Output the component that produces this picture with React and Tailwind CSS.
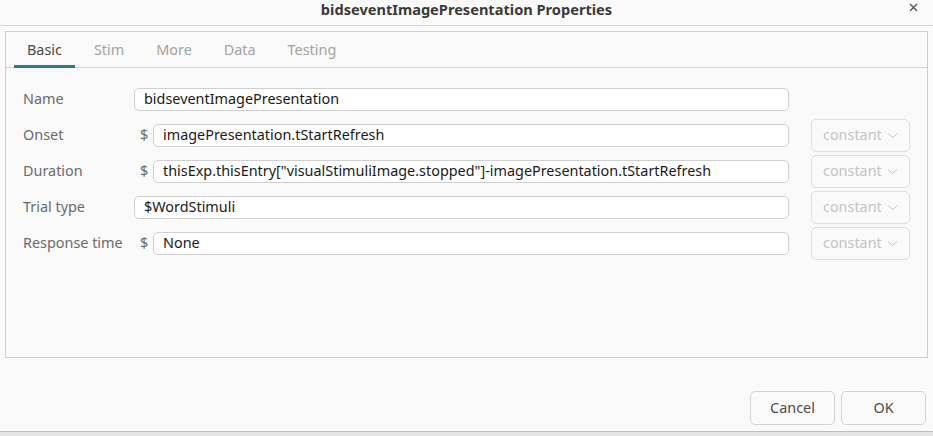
import React from 'react';

const tabs = ['Basic', 'Stim', 'More', 'Data', 'Testing'];

const rows = [
  { label: 'Name', value: 'bidseventImagePresentation', dollar: false, combo: false },
  { label: 'Onset', value: 'imagePresentation.tStartRefresh', dollar: true, combo: true },
  {
    label: 'Duration',
    value: 'thisExp.thisEntry["visualStimuliImage.stopped"]-imagePresentation.tStartRefresh',
    dollar: true,
    combo: true,
  },
  { label: 'Trial type', value: '$WordStimuli', dollar: false, combo: true },
  { label: 'Response time', value: 'None', dollar: true, combo: true },
];

const Combo = () => (
  <div className="w-[99px] h-[33px] shrink-0 rounded-[5px] border border-[#dedede] flex items-center pl-[11px] text-[#c4c4c4]">
    <span>constant</span>
    <svg width="11" height="7" viewBox="0 0 11 7" className="ml-[5px] mt-[1px]">
      <path d="M1 1.5 L5.5 5.5 L10 1.5" fill="none" stroke="#c4c4c4" strokeWidth="1" />
    </svg>
  </div>
);

const App = () => {
  return (
    <div className="w-[933px] h-[436px] bg-[#e4e4e4] font-['Noto_Sans',sans-serif] text-[14.4px]">
      <div className="h-[432px] bg-[#fafafa] border-b border-[#bdbdbd] flex flex-col">
        {/* title bar */}
        <div className="relative h-[26px] border-b border-[#d6d6d6] flex items-center justify-center">
          <span className="font-bold text-[14.6px] text-[#3a3a3a] -mt-[6px]">
            bidseventImagePresentation Properties
          </span>
          <svg width="9" height="9" viewBox="0 0 9 9" className="absolute right-[15px] top-[3px]">
            <path d="M1 1 L8 8 M8 1 L1 8" stroke="#555" strokeWidth="1.4" />
          </svg>
        </div>

        {/* panel */}
        <div className="mx-[5px] mt-[5px] h-[327px] border border-[#cdcdcd] flex flex-col">
          <div className="h-[36px] border-b border-[#d4d4d4] flex items-end pl-[8px] gap-[6px]">
            {tabs.map((t, i) => (
              <div
                key={t}
                className={`h-full px-[13px] flex items-center border-b-[3px] -mb-[1px] ${
                  i === 0 ? 'border-[#2e7d78] text-[#4a4a4a]' : 'border-transparent text-[#a3a3a3]'
                }`}
              >
                <span className="mt-[1px]">{t}</span>
              </div>
            ))}
          </div>

          <div className="pt-[13px] pl-[17px] pr-[17px] flex flex-col">
            {rows.map((r) => (
              <div key={r.label} className="h-[36px] flex items-center">
                <span className="w-[111px] shrink-0 text-[#6a6a6a]">{r.label}</span>
                {r.dollar && <span className="w-[19px] shrink-0 pl-[6px] text-[#6a6a6a]">$</span>}
                <div className="flex-1 h-[23px] rounded-[5px] border border-[#cfcfcf] bg-white flex items-center pl-[9px] text-[#1a1a1a] whitespace-nowrap overflow-hidden">
                  {r.value}
                </div>
                <div className="w-[22px] shrink-0" />
                {r.combo ? <Combo /> : <div className="w-[99px] shrink-0" />}
              </div>
            ))}
          </div>
        </div>

        {/* buttons */}
        <div className="mt-[33px] flex justify-end gap-[6px] pr-[7px]">
          <button className="w-[85px] h-[34px] rounded-[5px] border border-[#d2d2d2] bg-[#fafafa] text-[#4a4a4a]">
            Cancel
          </button>
          <button className="w-[85px] h-[34px] rounded-[5px] border border-[#d2d2d2] bg-[#fafafa] text-[#4a4a4a]">
            OK
          </button>
        </div>
      </div>
    </div>
  );
};

export default App;
